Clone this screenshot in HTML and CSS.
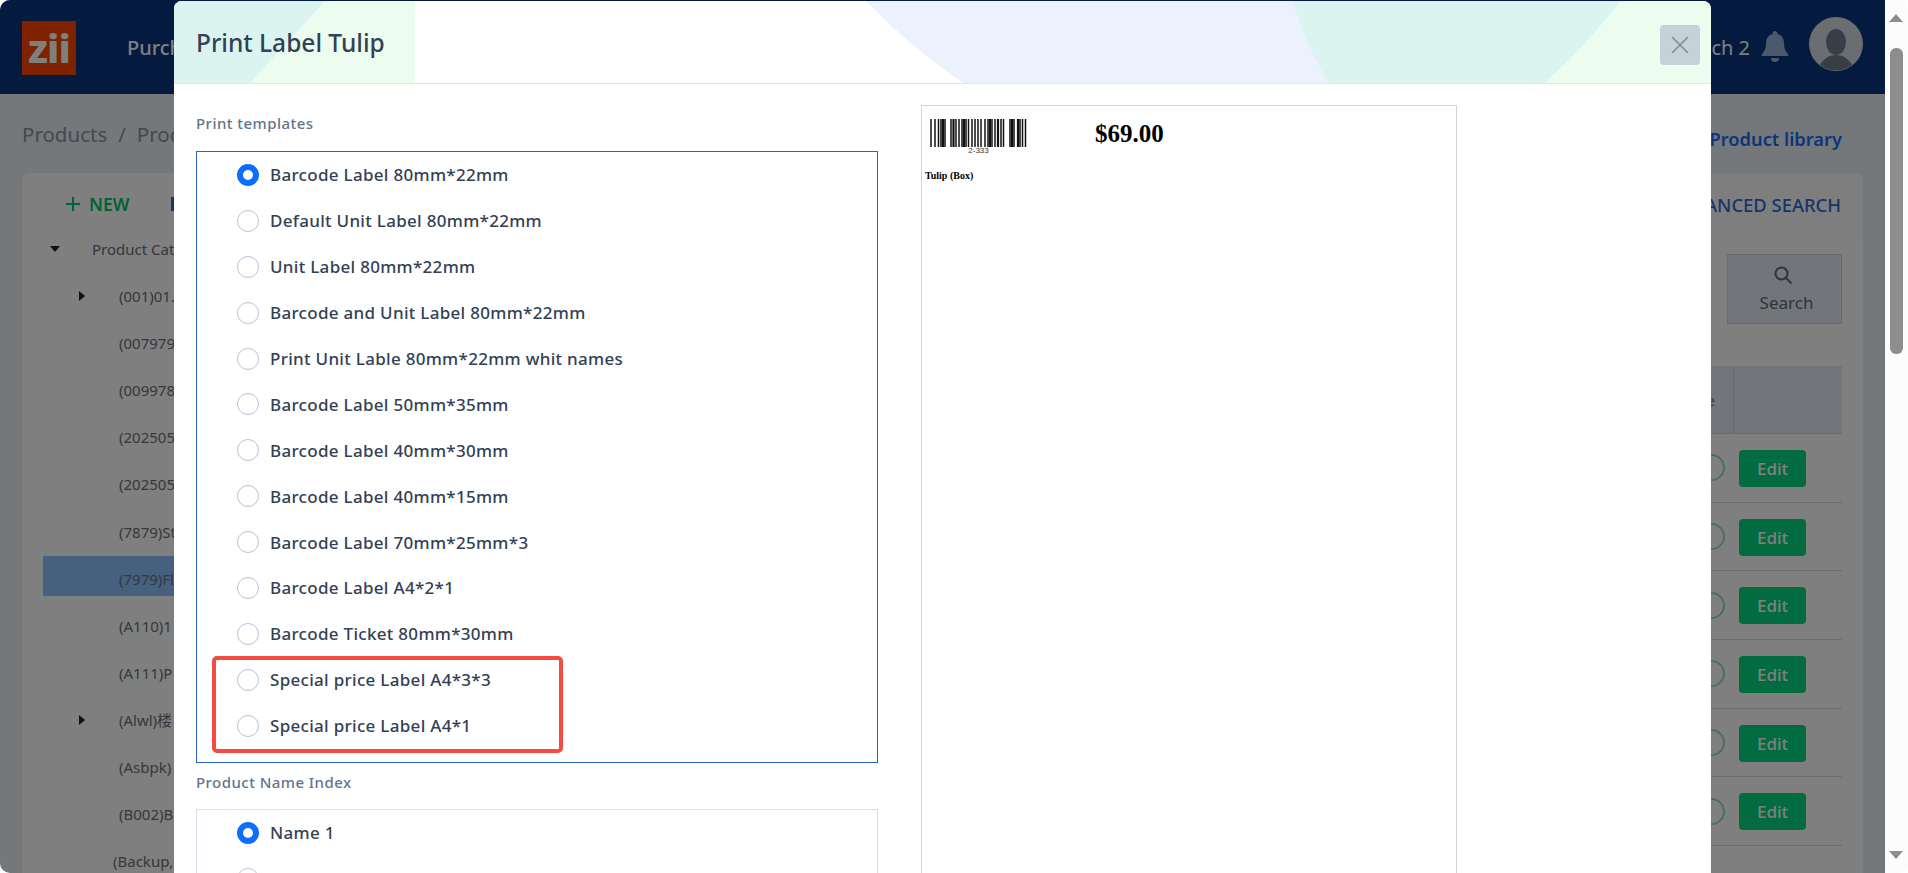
FILE: index.html
```html
<!DOCTYPE html>
<html lang="en">
<head>
    <meta charset="UTF-8">
    <meta name="viewport" content="width=device-width, initial-scale=1.0">
    <title>Print Label Tulip</title>
    <link rel="stylesheet" href="styles.css">
</head>
<body>
    <div class="window">
        <div class="page">
            <!-- Top bar -->
            <header class="nav">
                <div class="logo">zii</div>
                <a class="nav-link">Purchase</a>
                <div class="nav-right">
                    <span class="branch">Branch 2</span>
                    <svg class="bell" viewBox="0 0 28 32"><path d="M14 1a2.5 2.5 0 0 1 2.5 3c4.500 1 6.500 5 6.500 9 0 5 1 8 4 11 .8.800.3 2-.8 2H1.800c-1.100 0-1.600-1.200-.8-2 3-3 4-6 4-11 0-4 2-8 6.500-9A2.500 2.500 0 0 1 14 1zM10 28h8a4 4 0 0 1-8 0z"/></svg>
                    <svg class="avatar" viewBox="0 0 54 54"><circle cx="27" cy="27" r="27" fill="#d4dce0"/><ellipse cx="27" cy="25" rx="10" ry="13" fill="#6e7c8c"/><path d="M11 48c3-6 9-10 16-10s13 4 16 10a27 27 0 0 1-32 0z" fill="#6e7c8c"/></svg>
                </div>
            </header>

            <div class="crumbs">
                <div class="crumb-path">Products<span class="crumb-sep">/</span>Products</div>
                <a class="library-link">Product library</a>
            </div>

            <div class="card">
                <aside class="side">
                    <div class="side-tools">
                        <span class="btn-new"><svg viewBox="0 0 16 16"><path d="M8 1v14M1 8h14"/></svg>NEW</span>
                        <span class="btn-mark"></span>
                    </div>
                    <ul class="tree">
                        <li class="tree-row root"><i class="arrow-down"></i>Product Catalog</li>
                        <li class="tree-row"><i class="arrow-right"></i>(001)01.</li>
                        <li class="tree-row">(007979</li>
                        <li class="tree-row">(009978</li>
                        <li class="tree-row">(202505</li>
                        <li class="tree-row">(202505</li>
                        <li class="tree-row">(7879)St</li>
                        <li class="tree-row active">(7979)Fl</li>
                        <li class="tree-row">(A110)1</li>
                        <li class="tree-row">(A111)P</li>
                        <li class="tree-row"><i class="arrow-right"></i>(Alwl)楼</li>
                        <li class="tree-row">(Asbpk)</li>
                        <li class="tree-row">(B002)B</li>
                        <li class="tree-row wide">(Backup,</li>
                    </ul>
                </aside>

                <section class="main">
                    <div class="main-head">ADVANCED SEARCH</div>
                    <div class="filters">
                        <button class="btn-search">
                            <svg viewBox="0 0 20 20"><circle cx="8.500" cy="8.500" r="6"/><path d="M13 13l5.500 5.500"/></svg>
                            Search
                        </button>
                    </div>
                    <div class="table">
                        <div class="table-head"><span class="th-text">Enable</span><span class="th-last"></span></div>
                        <div class="table-row"><span class="toggle"></span><button class="btn-edit">Edit</button></div>
                        <div class="table-row"><span class="toggle"></span><button class="btn-edit">Edit</button></div>
                        <div class="table-row"><span class="toggle"></span><button class="btn-edit">Edit</button></div>
                        <div class="table-row"><span class="toggle"></span><button class="btn-edit">Edit</button></div>
                        <div class="table-row"><span class="toggle"></span><button class="btn-edit">Edit</button></div>
                        <div class="table-row"><span class="toggle"></span><button class="btn-edit">Edit</button></div>
                    </div>
                </section>
            </div>

            <div class="backdrop"></div>

            <!-- Print dialog -->
            <div class="modal">
                <div class="modal-head">
                    <svg class="modal-decor" viewBox="0 0 1537 82" preserveAspectRatio="none">
                        <rect width="241" height="82" fill="#ecfdf0"/>
                        <path d="M0 0H151Q110 45 76 82H0Z" fill="#dcf4f0"/>
                        <path d="M692 0Q735 45 789 82H1200V0Z" fill="#ebf2fe"/>
                        <path d="M1119 0Q1130 42 1155 82H1371Q1415 42 1447 0Z" fill="#dcf4f0"/>
                        <path d="M1447 0Q1415 42 1371 82H1537V0Z" fill="#ecfdf0"/>
                    </svg>
                    <h2 class="modal-title">Print Label Tulip</h2>
                    <button class="btn-close"><svg viewBox="0 0 20 20"><path d="M2 2l16 16M18 2L2 18"/></svg></button>
                </div>
                <div class="modal-body">
                    <div class="form-col">
                        <div class="field-label">Print templates</div>
                        <div class="radio-box focused">
                            <label class="radio-row"><input type="radio" name="tpl" checked>Barcode Label 80mm*22mm</label>
                            <label class="radio-row"><input type="radio" name="tpl">Default Unit Label 80mm*22mm</label>
                            <label class="radio-row"><input type="radio" name="tpl">Unit Label 80mm*22mm</label>
                            <label class="radio-row"><input type="radio" name="tpl">Barcode and Unit Label 80mm*22mm</label>
                            <label class="radio-row"><input type="radio" name="tpl">Print Unit Lable 80mm*22mm whit names</label>
                            <label class="radio-row"><input type="radio" name="tpl">Barcode Label 50mm*35mm</label>
                            <label class="radio-row"><input type="radio" name="tpl">Barcode Label 40mm*30mm</label>
                            <label class="radio-row"><input type="radio" name="tpl">Barcode Label 40mm*15mm</label>
                            <label class="radio-row"><input type="radio" name="tpl">Barcode Label 70mm*25mm*3</label>
                            <label class="radio-row"><input type="radio" name="tpl">Barcode Label A4*2*1</label>
                            <label class="radio-row"><input type="radio" name="tpl">Barcode Ticket 80mm*30mm</label>
                            <label class="radio-row"><input type="radio" name="tpl">Special price Label A4*3*3</label>
                            <label class="radio-row"><input type="radio" name="tpl">Special price Label A4*1</label>
                            <div class="callout"></div>
                        </div>
                        <div class="field-label second">Product Name Index</div>
                        <div class="radio-box">
                            <label class="radio-row"><input type="radio" name="idx" checked>Name 1</label>
                            <label class="radio-row"><input type="radio" name="idx">Name 2</label>
                        </div>
                    </div>
                    <div class="preview">
                        <div class="label-top">
                            <div class="barcode">
                                <svg viewBox="0 0 97 28" preserveAspectRatio="none">
                                    <path d="M1 0v28M5 0v28M8.500 0v28M11 0v28M15 0v28M21 0v28M26 0v28M29 0v28M32 0v28M36 0v28M38.500 0v28M42 0v28M45 0v28M48 0v28M51 0v28M55 0v28M58 0v28M62 0v28M65 0v28M71 0v28M73.500 0v28M80 0v28M84 0v28M90 0v28M92.500 0v28M95.500 0v28" stroke-width="1.500"/>
                                    <path d="M13 0v28M23.500 0v28M34 0v28M60 0v28M68 0v28M82 0v28M88 0v28" stroke-width="2.200"/>
                                </svg>
                                <span class="barcode-no">2-333</span>
                            </div>
                            <div class="label-price">$69.00</div>
                        </div>
                        <div class="label-name"><b>Tulip</b> (Box)</div>
                    </div>
                </div>
            </div>
        </div>

        <!-- Browser scrollbar -->
        <div class="scrollbar">
            <i class="scroll-up"></i>
            <div class="scroll-thumb"></div>
            <i class="scroll-down"></i>
        </div>
    </div>
</body>
</html>
```

FILE: styles.css
```css
html, body {
    margin: 0;
    padding: 0;
    height: 100%;
    background: #fff;
    overflow: hidden;
}

body {
    font-family: "Noto Sans", "Noto Sans CJK SC", Arial, sans-serif;
}

.window {
    width: 1908px;
    height: 873px;
    display: flex;
    overflow: hidden;
    border-radius: 10px;
}

.page {
    position: relative;
    width: 1885px;
    height: 873px;
    overflow: hidden;
    background: #eaf0f6;
    flex: none;
}

/* top bar */
.nav {
    height: 94px;
    display: flex;
    align-items: center;
    padding: 0 22px;
    box-sizing: border-box;
    background: #08347e;
    color: #fff;
}

.logo {
    width: 54px;
    height: 54px;
    margin-top: 2px;
    background: #ff4500;
    color: #fff;
    font-size: 40px;
    font-weight: 800;
    line-height: 54px;
    letter-spacing: -1px;
    text-align: center;
}

.nav-link {
    margin-left: 51px;
    font-size: 20px;
    font-weight: 500;
}

.nav-right {
    margin-left: auto;
    display: flex;
    align-items: center;
}

.branch {
    font-size: 20px;
}

.bell {
    width: 28px;
    height: 32px;
    margin: -2px 20px 0 11px;
    fill: #94b3d9;
}

.avatar {
    width: 54px;
    height: 54px;
    margin-top: -6px;
}

/* breadcrumb row */
.crumbs {
    height: 79px;
    display: flex;
    align-items: center;
    justify-content: space-between;
    padding: 0 43px 0 22px;
}

.crumb-path {
    font-size: 20.500px;
    color: #8a929e;
}

.crumb-sep {
    margin: 0 11px;
}

.library-link {
    font-size: 18.300px;
    font-weight: 600;
    color: #1a6cf0;
    margin-top: 10px;
}

/* card with tree and table */
.card {
    margin: 0 22px;
    height: 900px;
    display: flex;
    background: #fff;
    border-radius: 8px;
}

.side {
    width: 340px;
    flex: none;
}

.side-tools {
    height: 53px;
    display: flex;
    align-items: center;
    padding: 8px 0 0 43px;
    box-sizing: border-box;
}

.btn-new {
    display: flex;
    align-items: center;
    gap: 8px;
    color: #00c46c;
    font-size: 17.500px;
    font-weight: 600;
}

.btn-new svg {
    width: 16px;
    height: 16px;
    fill: none;
    stroke: #00c46c;
    stroke-width: 2;
}

.btn-mark {
    width: 6px;
    height: 14px;
    margin-left: 42px;
    background: #2a6fe0;
}

.tree {
    list-style: none;
    margin: 0;
    padding: 0;
}

.tree-row {
    position: relative;
    height: 47.1px;
    line-height: 47.1px;
    padding-left: 97px;
    font-size: 15px;
    color: #6a7078;
    white-space: nowrap;
}

.tree-row.root {
    padding-left: 70px;
}

.tree-row.wide {
    padding-left: 91px;
}

.tree-row.active {
    margin-left: 21px;
    padding-left: 76px;
    background: linear-gradient(#8cc2fe, #8cc2fe) no-repeat top / 100% 40px;
}

.arrow-down, .arrow-right {
    position: absolute;
    width: 0;
    height: 0;
}

.arrow-down {
    left: 28px;
    top: 20px;
    border-left: 5px solid transparent;
    border-right: 5px solid transparent;
    border-top: 6px solid #222;
}

.arrow-right {
    left: 57px;
    top: 18px;
    border-top: 5px solid transparent;
    border-bottom: 5px solid transparent;
    border-left: 6px solid #222;
}

.main {
    flex: 1;
    min-width: 0;
}

.main-head {
    height: 70px;
    line-height: 64px;
    text-align: right;
    padding-right: 22px;
    font-size: 18.400px;
    font-weight: 500;
    color: #2a6cd8;
    background: #fdfdfd;
    border-radius: 0 8px 0 0;
}

.filters {
    display: flex;
    justify-content: flex-end;
    padding: 11px 21px 0 0;
}

.btn-search {
    width: 115px;
    height: 70px;
    display: flex;
    flex-direction: column;
    align-items: center;
    justify-content: center;
    gap: 6px;
    padding: 0 0 0 4px;
    background: #e4ecf4;
    border: 1px solid #cdd6e0;
    color: #5e6870;
    font-family: inherit;
    font-size: 17px;
}

.btn-search svg {
    width: 20px;
    height: 20px;
    margin-right: 7px;
    fill: none;
    stroke: #5e6870;
    stroke-width: 2;
}

.table {
    margin: 42px 21px 0 0;
}

.table-head {
    height: 67px;
    display: flex;
    justify-content: flex-end;
    align-items: center;
    background: #e4ecf4;
    border-bottom: 1px solid #d5dce6;
    box-sizing: content-box;
    font-size: 15px;
    color: #6a7078;
}

.th-text {
    padding-right: 18px;
}

.th-last {
    width: 108px;
    align-self: stretch;
    border-left: 1px solid #cdd6e0;
}

.table-row {
    height: 67.700px;
    display: flex;
    justify-content: flex-end;
    align-items: center;
    gap: 14px;
    padding-right: 36px;
    border-bottom: 1px solid #d5dce6;
}

.toggle {
    width: 23px;
    height: 23px;
    border: 2px solid #8fe0bb;
    border-radius: 50%;
}

.btn-edit {
    width: 67px;
    height: 37px;
    margin-top: 1px;
    background: #04d67e;
    border: none;
    border-radius: 4px;
    color: #fff;
    font-family: inherit;
    font-size: 17px;
    font-weight: 500;
}

.backdrop {
    position: absolute;
    inset: 0;
    background: rgba(0, 0, 0, 0.5);
}

/* dialog */
.modal {
    position: absolute;
    left: 174px;
    top: 1px;
    width: 1537px;
    height: 950px;
    background: #fff;
    border-radius: 8px;
    overflow: hidden;
}

.modal-head {
    position: relative;
    height: 82px;
    display: flex;
    align-items: center;
    justify-content: space-between;
    padding: 0 11px 0 22px;
    border-bottom: 1px solid #dfe5ec;
}

.modal-decor {
    position: absolute;
    left: 0;
    top: 0;
    width: 100%;
    height: 100%;
}

.modal-title {
    position: relative;
    margin: 0;
    font-size: 24.500px;
    font-weight: 500;
    color: #334155;
}

.btn-close {
    position: relative;
    width: 40px;
    height: 40px;
    padding: 0;
    margin-top: 5px;
    background: #c5d3d8;
    border: none;
    border-radius: 4px;
    display: flex;
    align-items: center;
    justify-content: center;
}

.btn-close svg {
    width: 20px;
    height: 20px;
    fill: none;
    stroke: #7b8a8d;
    stroke-width: 1.500;
}

.modal-body {
    display: flex;
    gap: 43px;
    padding: 21px 22px;
}

.form-col {
    width: 682px;
    flex: none;
}

.field-label {
    height: 20px;
    line-height: 20px;
    margin: 8px 0 18px;
    font-size: 15px;
    font-weight: 500;
    letter-spacing: 0.450px;
    color: #64748b;
}

.field-label.second {
    margin: 9px 0 17px;
}

.radio-box {
    position: relative;
    box-sizing: border-box;
    padding: 0 0 13.300px 40px;
    border: 1px solid #d7e0ea;
}

.radio-box.focused {
    border-color: #2264c0;
}

.radio-row {
    height: 45.900px;
    display: flex;
    align-items: center;
    gap: 11px;
    font-size: 17px;
    font-weight: 500;
    letter-spacing: 0.300px;
    color: #334155;
}

.radio-row input {
    appearance: none;
    width: 22px;
    height: 22px;
    margin: 0;
    box-sizing: border-box;
    border: 1px solid #b8c4d8;
    border-radius: 50%;
    background: #fff;
}

.radio-row input:checked {
    border: 6px solid #0d6efd;
}

.callout {
    position: absolute;
    left: 15px;
    top: 504px;
    width: 343px;
    height: 89px;
    border: 4px solid #f44c42;
    border-radius: 5px;
}

.preview {
    width: 536px;
    height: 900px;
    box-sizing: border-box;
    border: 1px solid #d3d3d3;
    font-family: "Liberation Serif", serif;
    color: #000;
}

.label-top {
    display: flex;
    padding: 13px 0 0 8px;
}

.barcode {
    width: 97px;
    display: flex;
    flex-direction: column;
    align-items: center;
}

.barcode svg {
    width: 97px;
    height: 28px;
    stroke: #111;
    fill: none;
}

.barcode-no {
    font-family: "Liberation Sans", sans-serif;
    font-size: 8px;
    line-height: 8px;
    color: #333;
}

.label-price {
    margin-left: 68px;
    font-size: 25px;
    font-weight: bold;
    line-height: 30px;
}

.label-name {
    margin: 15px 0 0 3px;
    font-size: 10px;
    font-weight: bold;
}

/* browser scrollbar */
.scrollbar {
    position: relative;
    width: 23px;
    height: 873px;
    flex: none;
    background: #fcfcfc;
}

.scroll-up, .scroll-down {
    position: absolute;
    left: 4px;
    width: 0;
    height: 0;
    border-left: 7.500px solid transparent;
    border-right: 7.500px solid transparent;
}

.scroll-up {
    top: 14px;
    border-bottom: 8px solid #8d8d8d;
}

.scroll-down {
    top: 851px;
    border-top: 8px solid #8d8d8d;
}

.scroll-thumb {
    position: absolute;
    left: 5px;
    top: 48px;
    width: 13px;
    height: 306px;
    background: #8d8d8d;
    border-radius: 6px;
}
```
